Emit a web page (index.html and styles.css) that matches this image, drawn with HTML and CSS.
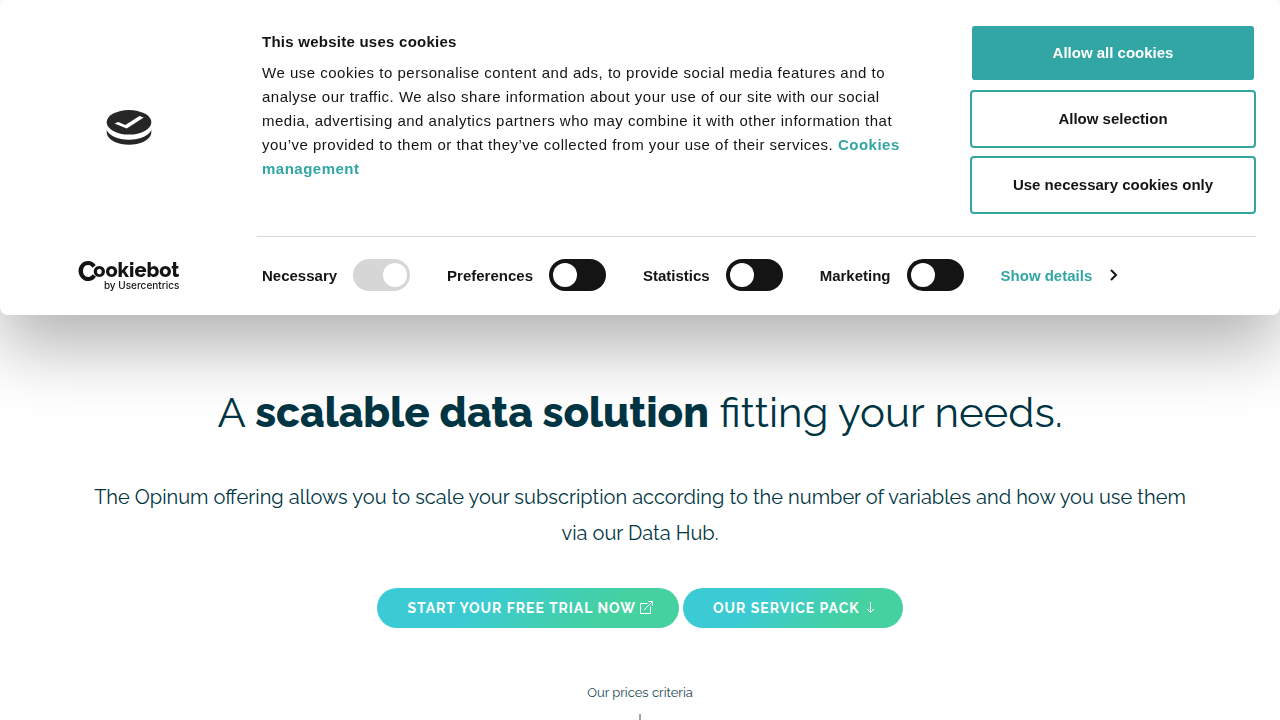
FILE: index.html
```html
<!DOCTYPE html>
<html lang="en">
<head>
<meta charset="utf-8">
<meta name="viewport" content="width=device-width, initial-scale=1">
<title>Opinum pricing</title>
<link rel="stylesheet" href="styles.css">
</head>
<body>
<main class="page">
  <h1 class="headline">A <strong>scalable data solution</strong> fitting your needs.</h1>
  <p class="intro">The Opinum offering allows you to scale your subscription according to the number of variables and how you use them via our Data Hub.</p>
  <div class="actions">
    <a class="pill" href="#trial">START YOUR FREE TRIAL NOW
      <svg class="pill-icon" viewBox="0 0 13 13" aria-hidden="true"><path d="M7.500 2.500h-7v10h10v-7M4 9l8-8M8.500.5h4v4"/></svg></a>
    <a class="pill" href="#pack">OUR SERVICE PACK
      <svg class="pill-icon" viewBox="0 0 13 13" aria-hidden="true"><path d="M6.500 1v10.500M3 8l3.500 3.500L10 8"/></svg></a>
  </div>
  <a class="criteria" href="#criteria">Our prices criteria
    <svg class="criteria-arrow" viewBox="0 0 14 28" aria-hidden="true"><path d="M7 0v26M1 20l6 6 6-6"/></svg></a>
</main>

<div class="dialog" role="dialog" aria-labelledby="cookie-title">
  <div class="site-logo">
    <svg class="cookie" viewBox="0 0 46 35" aria-hidden="true">
      <path fill="#262626" d="M.7 16V23C3 38.500 43 38.500 45.300 23V16Z"/>
      <path fill="#fff" d="M0 12V18C3 33.500 43 33.500 46 18V12Z"/>
      <ellipse cx="23" cy="12.300" rx="22.300" ry="12.300" fill="#262626"/>
      <path fill="#fff" d="M8.500 13.500l3.800-1.600 7 3L33.500 6l4.200 1.500-17 11Z"/>
    </svg>
  </div>
  <div class="message">
    <h2 class="message-title" id="cookie-title">This website uses cookies</h2>
    <p class="message-text">We use cookies to personalise content and ads, to provide social media features and to analyse our traffic. We also share information about your use of our site with our social media, advertising and analytics partners who may combine it with other information that you’ve provided to them or that they’ve collected from your use of their services. <a class="link" href="#cookies">Cookies management</a></p>
  </div>
  <div class="choices">
    <button class="choice choice-primary" type="button">Allow all cookies</button>
    <button class="choice" type="button">Allow selection</button>
    <button class="choice" type="button">Use necessary cookies only</button>
  </div>
  <a class="brand" href="#cookiebot"><span class="brand-name">Cookiebot</span><span class="brand-by">by Usercentrics</span></a>
  <div class="options">
    <label class="option">Necessary <input class="toggle" type="checkbox" checked disabled></label>
    <label class="option">Preferences <input class="toggle" type="checkbox"></label>
    <label class="option">Statistics <input class="toggle" type="checkbox"></label>
    <label class="option">Marketing <input class="toggle" type="checkbox"></label>
    <a class="details" href="#details">Show details
      <svg class="chevron" viewBox="0 0 8 12" aria-hidden="true"><path d="M1 1l5 5-5 5"/></svg></a>
  </div>
</div>
</body>
</html>
```
FILE: styles.css
```css
* { box-sizing: border-box; }
body {
  margin: 0;
  background: #fff;
  color: #003543;
  font-family: Raleway, Lato, sans-serif;
  overflow: hidden;
}
.page {
  display: flex;
  flex-direction: column;
  align-items: center;
  padding: 388px 80px 0;
  text-align: center;
}
.headline {
  margin: 0;
  font-size: 42px;
  font-weight: 400;
  line-height: 50px;
}
.headline strong { font-weight: 800; }
.intro {
  margin: 41px 0 37px;
  font-size: 20px;
  line-height: 36px;
}
.actions { display: flex; gap: 4px; }
.pill {
  display: flex;
  align-items: center;
  gap: 4px;
  height: 40px;
  padding: 0 26px 0 30px;
  border-radius: 20px;
  background: linear-gradient(135deg, #3ccbd4 33%, #45d1a0 75%);
  color: #fff;
  font-size: 14px;
  font-weight: 700;
  letter-spacing: 1px;
  text-decoration: none;
}
.pill-icon { width: 13px; height: 13px; margin-bottom: 2px; fill: none; stroke: #fff; }
.criteria {
  display: flex;
  flex-direction: column;
  align-items: center;
  gap: 11px;
  margin-top: 55px;
  color: #1c4a56;
  font-size: 13px;
  line-height: 20px;
  text-decoration: none;
}
.criteria-arrow { width: 14px; height: 28px; fill: none; stroke: #23505b; }
.dialog {
  position: fixed;
  top: 0;
  left: 0;
  right: 0;
  display: grid;
  grid-template-columns: 257px 1fr 286px;
  padding: 24px 24px 24px 0;
  border-radius: 8px;
  background: #fff;
  box-shadow: 0 32px 68px rgba(0, 0, 0, 0.3);
  color: #141414;
  font-family: "Liberation Sans", Arial, sans-serif;
  font-size: 15px;
}
.site-logo { display: flex; justify-content: center; align-items: center; padding-top: 17px; }
.cookie { width: 46px; height: 35px; }
.message { padding: 6px 64px 0 5px; }
.message-title {
  margin: 0 0 7px;
  font-size: 15px;
  line-height: 24px;
  letter-spacing: 0.25px;
}
.message-text { margin: 0; line-height: 24px; letter-spacing: 0.5px; }
.link { color: #32a5a5; font-weight: 700; text-decoration: none; }
.choices { display: flex; flex-direction: column; gap: 8px; }
.choice {
  height: 58px;
  padding: 0 0 2px;
  border: 2px solid #32a5a5;
  border-radius: 4px;
  background: #fff;
  color: #141414;
  font: 700 15px "Liberation Sans", Arial, sans-serif;
}
.choice-primary { border-color: #fff; background: #32a5a5 padding-box; color: #fff; }
.brand {
  display: flex;
  flex-direction: column;
  justify-self: center;
  align-items: flex-end;
  margin-top: 45px;
  color: #141414;
  text-decoration: none;
}
.brand-name { height: 20px; font: 800 20px/22px Raleway, Lato, sans-serif; }
.brand-name::first-letter { margin-right: -3px; font-size: 27px; line-height: 22px; vertical-align: -4px; }
.brand-by { font: 500 10px/12px Inter, sans-serif; }
.options {
  grid-column: 2 / 4;
  display: flex;
  align-items: center;
  gap: 37px;
  margin-top: 22px;
  padding: 22px 5px 0;
  border-top: 1px solid #d6d6d6;
  font-weight: 700;
}
.option { display: flex; align-items: center; gap: 16px; }
.toggle {
  appearance: none;
  width: 57px;
  height: 32px;
  margin: 0;
  padding: 4px;
  border-radius: 16px;
  background: #141414;
}
.toggle::before {
  content: "";
  display: block;
  width: 24px;
  height: 24px;
  border-radius: 50%;
  background: #fff;
}
.toggle:checked::before { margin-left: auto; }
.toggle:disabled { padding-right: 3px; background: #d6d6d6; }
.details {
  display: flex;
  align-items: center;
  gap: 18px;
  color: #32a5a5;
  text-decoration: none;
}
.chevron { width: 8px; height: 12px; fill: none; stroke: #141414; stroke-width: 2; }
```
